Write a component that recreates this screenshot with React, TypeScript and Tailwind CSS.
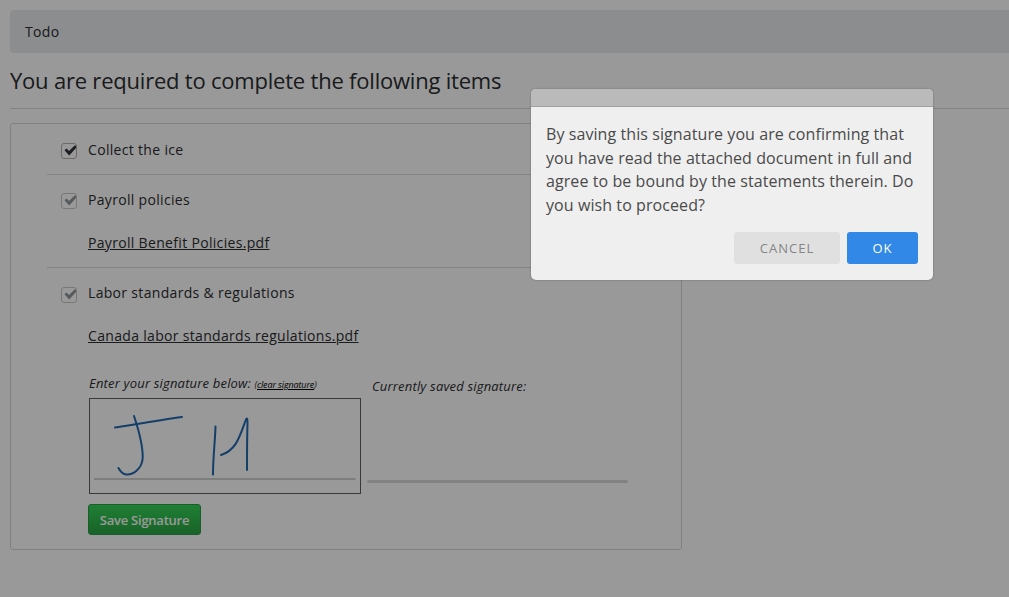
import type { ReactNode } from "react";

function Check({ muted = false }: { muted?: boolean }) {
  return (
    <span
      className={
        "block size-4 shrink-0 rounded-[3px] border " +
        (muted ? "border-[#ccc9c5]" : "border-[#b5b0aa]")
      }
    >
      <svg viewBox="0 0 14 14" className="size-3.5">
        <path
          d="M2.5 6.3L4.6 4.5L7 7L12.600 1.500L14 1.800V4L7.200 11.500Z"
          fill={muted ? "#92979a" : "#2e3538"}
        />
      </svg>
    </span>
  );
}

type ItemProps = { title: string; muted?: boolean; boxClass?: string; children?: ReactNode };

function Item({ title, muted, boxClass = "pt-1", children }: ItemProps) {
  return (
    <li className="border-b border-[#dcdcdc] pl-3.5 last:border-b-0">
      <div className="flex h-[50px] items-start pt-[15px]">
        <div className={boxClass}>
          <Check muted={muted} />
        </div>
        <span className={"ml-[11px] leading-5 " + (muted ? "" : "pt-px")}>{title}</span>
      </div>
      {children}
    </li>
  );
}

function Signature() {
  return (
    <div className="h-24 w-[272px] border border-[#606060]">
      <svg viewBox="90 399 270 94" className="h-[94px] w-[270px]" fill="none">
        <path d="M94 479H355.500" stroke="#d2d2d2" strokeWidth="2" />
        <g stroke="#2169b0" strokeWidth="2" strokeLinecap="round" strokeLinejoin="round">
          <path d="M115 427.500C137 424 160 420 182 417" />
          <path d="M134 416C138 428 143 445 142.700 458C142 469 133 475 126.500 474.600C122 474 120 471 118.500 468" />
          <path d="M215.500 426.500C215 442 213 458 213 474.500" />
          <path d="M221 455C237 450 240 435 246 419.500Q247.500 416.500 247.500 423C247 439 247 454 247 470" />
        </g>
      </svg>
    </div>
  );
}

export default function App() {
  return (
    <div className="relative h-[597px] w-full overflow-hidden bg-white font-['Open_Sans',sans-serif] text-sm tracking-[0.320px] text-[#2b2d30]">
      <main className="pt-2.5 pl-2.5">
        <nav className="flex h-[43px] items-center rounded-l-[4px] bg-[#e8ebee] pl-[15px]">Todo</nav>
        <h1 className="flex h-14 items-center border-b border-[#dcdcdc] text-[22px] tracking-[-0.210px]">
          You are required to complete the following items
        </h1>
        <section className="mt-3.5 h-[427px] w-[672px] rounded-[3px] border border-[#d8d8d8] px-9">
          <ul>
            <Item title="Collect the ice" />
            <Item title="Payroll policies" muted boxClass="pt-[3px]">
              <div className="h-[42px] pt-[8px] pl-[27px] leading-5">
                <a className="underline">Payroll Benefit Policies.pdf</a>
              </div>
            </Item>
            <Item title="Labor standards & regulations" muted>
              <div className="pt-[8px] pl-[27px]">
                <a className="block w-fit leading-5 underline">Canada labor standards regulations.pdf</a>
                <div className="mt-[27px] flex text-[13px] leading-5 tracking-[0.180px] italic">
                  <div>
                    <div className="ml-px h-[25px] whitespace-nowrap">
                      Enter your signature below:{" "}
                      <span className="text-[9px] tracking-[-0.130px]">
                        (<a className="text-black underline">clear signature</a>)
                      </span>
                    </div>
                    <div className="ml-px">
                      <Signature />
                    </div>
                  </div>
                  <div className="ml-1.5 w-[261px] pt-[3px]">
                    <div className="ml-[5px] h-[103.500px]">Currently saved signature:</div>
                    <div className="h-[3px] rounded-full bg-[#d9d9d9]" />
                  </div>
                </div>
                <button className="mt-2.5 block h-[31px] w-[113px] rounded-[3px] border border-[#2b9b43] bg-linear-to-b from-[#34d458] to-[#2aa543] pt-0.5 text-[13px] font-semibold tracking-[-0.250px] text-white">
                  Save Signature
                </button>
              </div>
            </Item>
          </ul>
        </section>
      </main>
      <div className="absolute inset-0 bg-black/40" />
      <div
        role="dialog"
        className="absolute top-[89px] left-[531px] h-[191px] w-[402px] overflow-hidden rounded-[5px] bg-[#efefef] shadow-[0_0_2px_rgba(0,0,0,0.35)]"
      >
        <div className="h-[18px] border-b border-[#a0a0a0] bg-[#bababa]" />
        <p className="h-[125px] px-[15px] pt-4 text-[16px] leading-[23.700px] tracking-[0.080px] text-[#4a4a4a]">
          By saving this signature you are confirming that you have read the attached document in full and agree to be
          bound by the statements therein. Do you wish to proceed?
        </p>
        <div className="flex justify-end gap-[7px] pr-[15px] text-[13px] tracking-[1px]">
          <button className="h-8 w-[106px] rounded-[3px] bg-[#e0e0e0] pt-px text-[#858585]">CANCEL</button>
          <button className="h-8 w-[71px] rounded-[3px] bg-[#3288e6] pt-px text-white">OK</button>
        </div>
      </div>
    </div>
  );
}
